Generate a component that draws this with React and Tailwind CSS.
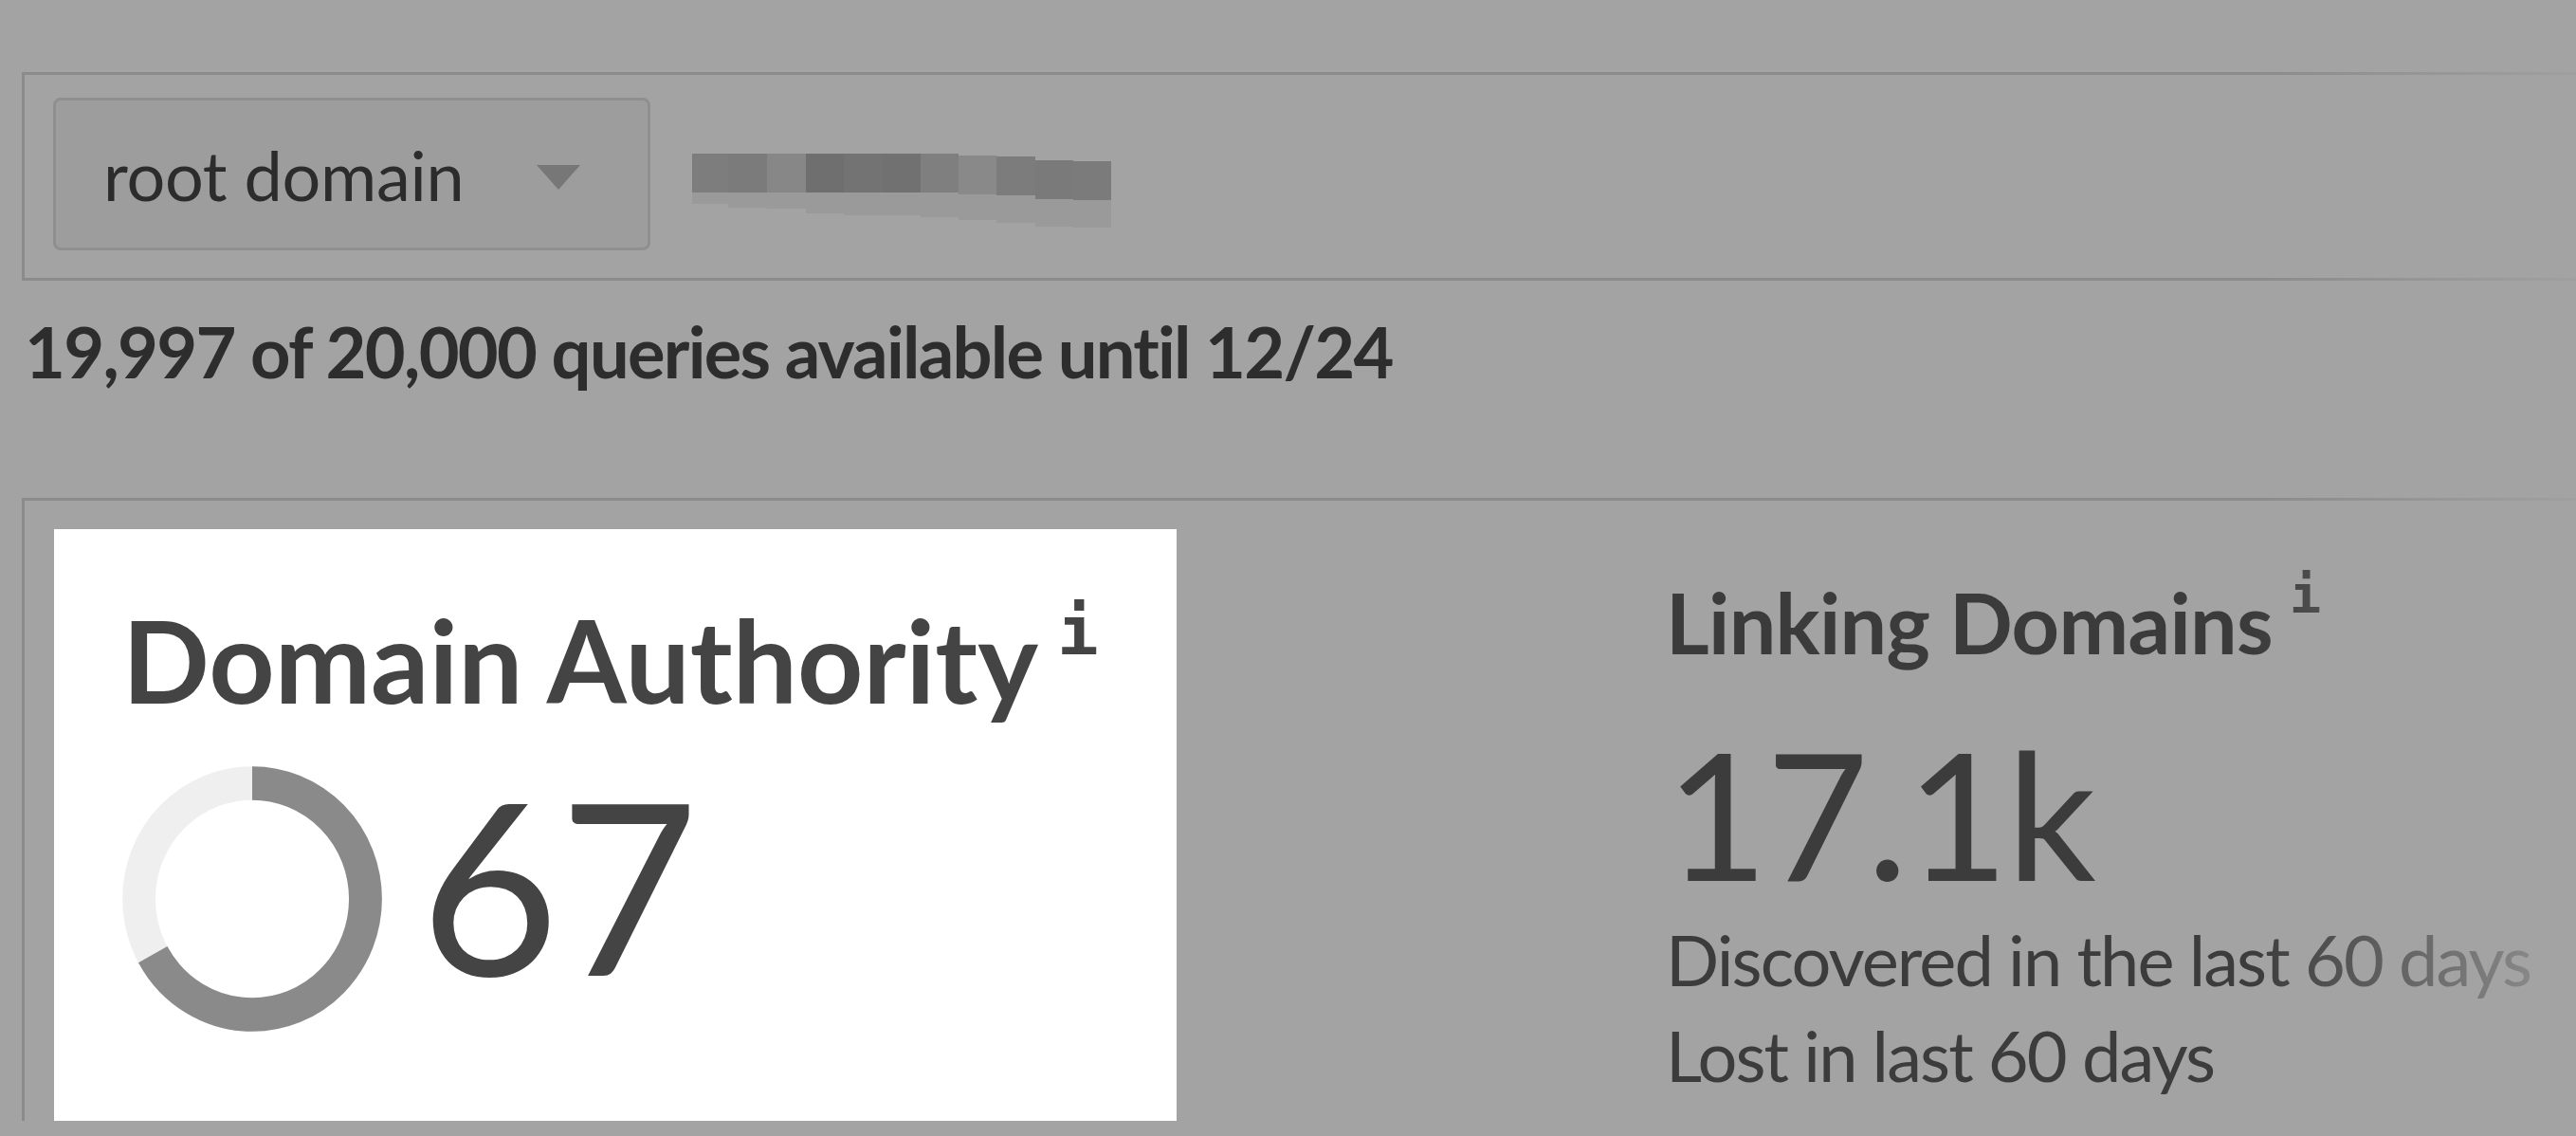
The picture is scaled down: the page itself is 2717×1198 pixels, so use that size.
const blurBlocks = [
  { w: 'w-[38px]', top: 'bg-[#7d7d7d]', bottom: 'h-[12px]', mt: 'mt-0' },
  { w: 'w-[41px]', top: 'bg-[#7b7b7b]', bottom: 'h-[16px]', mt: 'mt-0' },
  { w: 'w-[41px]', top: 'bg-[#878787]', bottom: 'h-[17px]', mt: 'mt-0' },
  { w: 'w-[40px]', top: 'bg-[#6f6f6f]', bottom: 'h-[22px]', mt: 'mt-0' },
  { w: 'w-[41px]', top: 'bg-[#737373]', bottom: 'h-[24px]', mt: 'mt-0' },
  { w: 'w-[40px]', top: 'bg-[#717171]', bottom: 'h-[24px]', mt: 'mt-0' },
  { w: 'w-[40px]', top: 'bg-[#7f7f7f]', bottom: 'h-[26px]', mt: 'mt-0' },
  { w: 'w-[40px]', top: 'bg-[#898989]', bottom: 'h-[27px]', mt: 'mt-[2px]' },
  { w: 'w-[41px]', top: 'bg-[#7c7c7c]', bottom: 'h-[29px]', mt: 'mt-[3px]' },
  { w: 'w-[40px]', top: 'bg-[#7a7a7a]', bottom: 'h-[29px]', mt: 'mt-[7px]' },
  { w: 'w-[40px]', top: 'bg-[#7b7b7b]', bottom: 'h-[29px]', mt: 'mt-[8px]' },
]

function BlurredDomain() {
  return (
    <div className="ml-[44px] mt-[59px] flex items-start">
      {blurBlocks.map((b, i) => (
        <div key={i} className={`flex flex-col ${b.w}`}>
          <div className={`h-[41px] ${b.top} ${b.mt}`} />
          <div className={`bg-[#9a9a9a] ${b.bottom}`} />
        </div>
      ))}
    </div>
  )
}

function Donut({ value }) {
  const r = 43.6
  const c = 2 * Math.PI * r
  return (
    <svg width="274" height="280" viewBox="0 0 100 100" preserveAspectRatio="none" className="shrink-0">
      <circle cx="50" cy="50" r={r} fill="none" stroke="#efefef" strokeWidth="12.7" />
      <circle
        cx="50"
        cy="50"
        r={r}
        fill="none"
        stroke="#8a8a8a"
        strokeWidth="12.7"
        strokeDasharray={`${(c * value) / 100} ${c}`}
        transform="rotate(-90 50 50)"
      />
    </svg>
  )
}

export default function App() {
  return (
    <div className="relative h-[1198px] w-full overflow-hidden bg-[#a3a3a3] font-['Lato',sans-serif]">
      <div className="pl-[23px] pt-[76px]">
        {/* search bar */}
        <div className="flex h-[220px] items-start border-[3px] border-r-0 border-[#8b8b8b] pl-[30px] pt-[24px]">
          <div className="flex h-[161px] w-[630px] items-center justify-between rounded-[8px] border-[3px] border-[#8f8f8f] bg-[#9d9d9d] pl-[50px] pr-[71px]">
            <span className="text-[72px] leading-none tracking-[-0.3px] text-[#2c2c2c]">root domain</span>
            <span className="mt-[6px] h-0 w-0 border-x-[23px] border-t-[26px] border-x-transparent border-t-[#777777]" />
          </div>
          <BlurredDomain />
        </div>

        <p className="mt-[38px] pl-[3px] text-[74px] font-bold leading-none tracking-[-1.7px] text-[#2d2d2d]">
          19,997 of 20,000 queries available until 12/24
        </p>

        {/* metrics card */}
        <div className="mt-[117px] flex items-start border-[3px] border-r-0 border-b-0 border-[#8b8b8b] pl-[31px] pt-[30px]">
          <div className="h-[624px] w-[1184px] shrink-0 bg-white pl-[72px] pt-[77px] text-[#444444]">
            <div className="flex items-start">
              <h2 className="text-[121px] font-bold leading-none">Domain Authority</h2>
              <span className="ml-[20px] mt-[-6px] font-['DejaVu_Sans_Mono',monospace] text-[72px] font-bold leading-none">i</span>
            </div>
            <div className="mt-[52px] flex items-start">
              <Donut value={67} />
              <span className="ml-[40px] mt-[-3px] text-[253px] leading-none">67</span>
            </div>
          </div>

          <div className="ml-[516px] shrink-0 pt-[54px] text-[#3c3c3c]">
            <div className="flex items-start">
              <h2 className="text-[88px] font-bold leading-none tracking-[-0.7px] text-[#3b3b3b]">Linking Domains</h2>
              <span className="ml-[18px] mt-[-12px] font-['DejaVu_Sans_Mono',monospace] text-[55px] font-bold leading-none">i</span>
            </div>
            <div className="mt-[64px] text-[186px] leading-none tracking-[-2px]">17.1k</div>
            <div className="mt-[11px] text-[74px] leading-[101px] tracking-[-1.9px]">
              <div>Discovered in the last 60 days</div>
              <div>Lost in last 60 days</div>
            </div>
          </div>
        </div>
      </div>

      {/* right edge fade of the screenshot */}
      <div className="pointer-events-none absolute right-0 top-0 h-full w-[340px] bg-linear-to-r from-[#a3a3a3]/0 to-[#a3a3a3]/85" />
    </div>
  )
}
